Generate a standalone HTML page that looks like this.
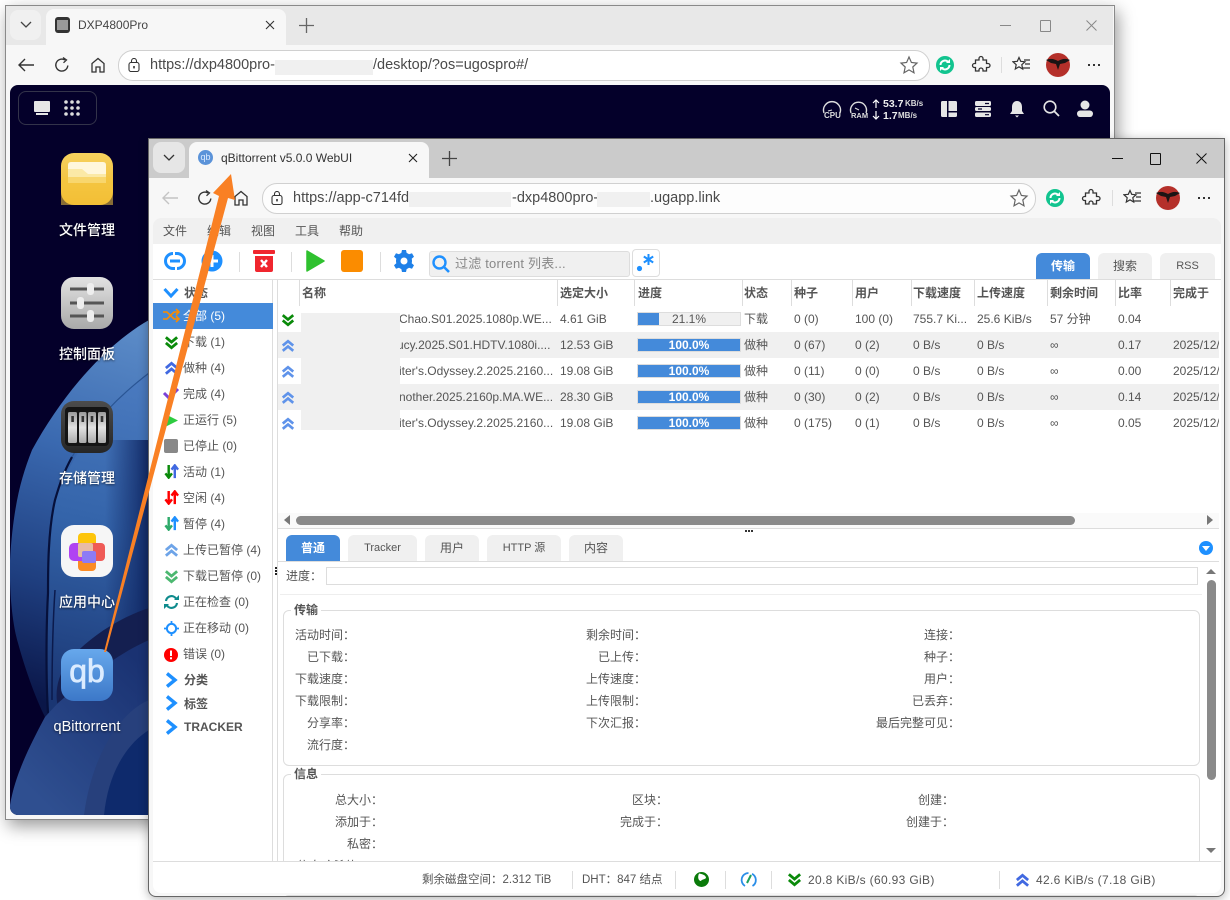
<!DOCTYPE html>
<html><head><meta charset="utf-8"><title>qBittorrent</title>
<style>
html,body{margin:0;padding:0;background:#fff;width:1230px;height:900px;overflow:hidden}
body{position:relative;font-family:"Liberation Sans","Noto Sans CJK SC",sans-serif;font-size:12px;color:#555}
div,span,svg{position:absolute}
span.t,.t{white-space:nowrap;line-height:16px;height:16px}
.b{font-weight:bold}
.r{text-align:right}
.url{font-size:14.5px;color:#4a4a4a;line-height:18px;height:18px;white-space:nowrap}
.lab{color:#fff;font-size:14px;line-height:18px;text-align:center;width:120px;left:27px;font-weight:500;text-shadow:0 1px 2px rgba(0,0,0,.6)}
.ic{left:61px;width:52px;height:52px;border-radius:13px;overflow:hidden}
.tab{background:#f0f0f0;border-radius:6px 6px 0 0;text-align:center;color:#555;line-height:26px;height:26px}
.act{background:#448ada;color:#fff;font-weight:bold}
.sm{font-size:11px}
.vl{width:1px;background:#ddd}
.gr{background:#f0f0f0}
.sep{width:1px;height:26px;top:280px;background:#ddd}
.pb{left:637px;width:102px;height:12px;background:#448ada;border:1px solid #ddd;color:#fff;text-align:center;line-height:13px;font-size:12px;font-weight:bold}
.st{letter-spacing:.33px}
svg{overflow:visible}
</style></head><body>
<svg width="0" height="0" style="left:0;top:0">
<symbol id="dn" viewBox="0 0 16 16"><path d="M2 2.5 8 7.500 14 2.500M2 8.500 8 13.500 14 8.500" fill="none" stroke="currentColor" stroke-width="3"/></symbol>
<symbol id="up" viewBox="0 0 16 16"><path d="M2 7.500 8 2.500 14 7.500M2 13.500 8 8.500 14 13.500" fill="none" stroke="currentColor" stroke-width="3"/></symbol>
<symbol id="ud" viewBox="0 0 16 16"><path d="M5 1V14M1.500 10 5 14.500 8.500 10" fill="none" stroke="var(--a)" stroke-width="2.600"/><path d="M11.500 15V2M8 6 11.500 1.500 15 6" fill="none" stroke="var(--b)" stroke-width="2.600"/></symbol>
<symbol id="star" viewBox="0 0 20 20"><path d="M10 2 12.400 7.500 18 8.100 13.800 12 15 17.800 10 14.900 5 17.800 6.200 12 2 8.100 7.600 7.500Z" fill="none" stroke="#666" stroke-width="1.200"/></symbol>
<symbol id="puz" viewBox="0 0 20 20"><path d="M8 3.500a2 2 0 0 1 4 0V5h3.500v3.500H17a2 2 0 0 1 0 4h-1.500V16H12v-1a2 2 0 0 0-4 0v1H4.500v-3.500H3.500a2 2 0 0 1 0-4h1V5H8Z" fill="none" stroke="#333" stroke-width="1.300"/></symbol>
<symbol id="fav" viewBox="0 0 20 20"><path d="M7 2.500 8.700 6.300 13 6.800 9.800 9.700 10.700 14 7 11.800 3.300 14 4.200 9.700 1 6.800 5.300 6.300Z" fill="none" stroke="#333" stroke-width="1.200"/><path d="M12 5h6M13 9h5M11 13h7" stroke="#333" stroke-width="1.200"/></symbol>
<symbol id="ext" viewBox="0 0 20 20"><circle cx="10" cy="10" r="9" fill="#12c48f"/><path d="M5.500 10a4.500 4.500 0 0 1 7.500-3.300M14.500 10a4.500 4.500 0 0 1-7.500 3.300" fill="none" stroke="#fff" stroke-width="2"/><path d="M11 8h4V4ZM9 12H5v4Z" fill="#fff"/></symbol>
<symbol id="ava" viewBox="0 0 24 24"><circle cx="12" cy="12" r="12" fill="#b5302a"/><path d="M0 7C5 5 8 6 12 8 16 6 19 5 24 7L19 10 14 11 12 17 10 11 5 10Z" fill="#1b1414"/></symbol>
<symbol id="home" viewBox="0 0 18 18"><path d="M3 16V7.500L9 2.500 15 7.500V16H11V11H7V16Z" fill="none" stroke="#333" stroke-width="1.300"/></symbol>
<symbol id="lock" viewBox="0 0 14 14"><rect x="2" y="4.500" width="10" height="9" rx="2" fill="none" stroke="#333" stroke-width="1.100"/><path d="M4.500 4.500V3a2.500 2.500 0 0 1 5 0V4.500" fill="none" stroke="#333" stroke-width="1.100"/><rect x="6.200" y="8" width="1.600" height="2.400" fill="#333"/></symbol>
<symbol id="rel" viewBox="0 0 18 18"><path d="M14.800 9.500A6 6 0 1 1 12 4" fill="none" stroke="#333" stroke-width="1.400"/><path d="M10 1.500 13.500 4 10.500 6.800" fill="none" stroke="#333" stroke-width="1.300"/></symbol>
<symbol id="chv" viewBox="0 0 16 16"><path d="M4 1.500 12 8 4 14.500" fill="none" stroke="#1e90ff" stroke-width="3.400"/></symbol>
</svg>

<!-- BACK WINDOW -->
<div style="left:5px;top:5px;width:1108px;height:813px;border:1px solid #8a8a8a;background:#f7f7f7;box-shadow:3px 6px 16px rgba(0,0,0,.4)"></div>
<div style="left:6px;top:6px;width:1107px;height:39px;background:#e8e8e8"></div>
<div style="left:10px;top:10px;width:31px;height:30px;background:#f0f0f0;border-radius:8px"></div>
<svg style="left:20px;top:20px" width="12" height="10"><path d="M1 2 6 7 11 2" fill="none" stroke="#444" stroke-width="1.300"/></svg>
<div style="left:46px;top:9px;width:240px;height:36px;background:#f7f7f7;border-radius:8px 8px 0 0"></div>
<div style="left:55px;top:17px;width:15px;height:16px;background:#333;border-radius:3px"></div>
<div style="left:57px;top:20px;width:11px;height:10px;background:#999"></div>
<span class="t" style="left:78px;top:17px;color:#444">DXP4800Pro</span>
<svg style="left:265px;top:20px" width="10" height="10"><path d="M1 1 9 9M9 1 1 9" stroke="#333" stroke-width="1.100"/></svg>
<svg style="left:299px;top:18px" width="15" height="15"><path d="M7.500 0V15M0 7.500H15" stroke="#666" stroke-width="1.300"/></svg>
<div style="left:1000px;top:25px;width:11px;height:1px;background:#888"></div>
<div style="left:1040px;top:20px;width:9px;height:10px;border:1px solid #888;border-radius:1px"></div>
<svg style="left:1086px;top:20px" width="11" height="11"><path d="M.5.5 10.500 10.500M10.500.5.500 10.500" stroke="#888" stroke-width="1"/></svg>
<svg style="left:17px;top:56px" width="18" height="18"><path d="M17 9H2M8 3 2 9 8 15" fill="none" stroke="#333" stroke-width="1.400"/></svg>
<svg style="left:53px;top:56px" width="18" height="18"><use href="#rel"/></svg>
<svg style="left:89px;top:56px" width="18" height="18"><use href="#home"/></svg>
<div style="left:118px;top:50px;width:810px;height:29px;border:1px solid #d0d0d0;border-radius:15px;background:#fff"></div>
<svg style="left:127px;top:58px" width="14" height="14"><use href="#lock"/></svg>
<span class="url" style="left:150px;top:56px">https://dxp4800pro-</span>
<div class="gr" style="left:275px;top:60px;width:98px;height:15px"></div>
<span class="url" style="left:373px;top:56px">/desktop/?os=ugospro#/</span>
<svg style="left:899px;top:55px" width="20" height="20"><use href="#star"/></svg>
<svg style="left:935px;top:55px" width="20" height="20"><use href="#ext"/></svg>
<svg style="left:971px;top:55px" width="20" height="20"><use href="#puz"/></svg>
<div class="vl" style="left:1001px;top:57px;height:16px"></div>
<svg style="left:1012px;top:55px" width="20" height="20"><use href="#fav"/></svg>
<svg style="left:1046px;top:53px" width="24" height="24"><use href="#ava"/></svg>
<span style="left:1088px;top:64px;width:2px;height:2px;background:#333;box-shadow:5px 0 #333,10px 0 #333"></span>

<!-- DESKTOP -->
<svg style="left:0;top:0" width="1230" height="900">
<defs>
<clipPath id="dc"><rect x="10" y="85" width="1100" height="730" rx="8"/></clipPath>
<linearGradient id="g1" gradientUnits="userSpaceOnUse" x1="149" y1="330" x2="35" y2="700"><stop offset="0" stop-color="#5c8cc8"/><stop offset=".35" stop-color="#3a69b0"/><stop offset=".7" stop-color="#1f3f80"/><stop offset="1" stop-color="#0a1648"/></linearGradient>
<linearGradient id="g2" gradientUnits="userSpaceOnUse" x1="130" y1="380" x2="60" y2="700"><stop offset="0" stop-color="#4a7abf"/><stop offset=".45" stop-color="#3464aa"/><stop offset="1" stop-color="#1a3673"/></linearGradient>
<linearGradient id="g2b" gradientUnits="userSpaceOnUse" x1="105" y1="0" x2="149" y2="0"><stop offset="0" stop-color="#0e2460" stop-opacity="0"/><stop offset="1" stop-color="#0e2460" stop-opacity=".9"/></linearGradient>
<linearGradient id="g3" gradientUnits="userSpaceOnUse" x1="30" y1="790" x2="149" y2="670"><stop offset="0" stop-color="#2f4f90"/><stop offset="1" stop-color="#1a3272"/></linearGradient>
</defs>
<g clip-path="url(#dc)">
<rect x="10" y="85" width="1100" height="730" fill="#04002a"/>
<path d="M149 320C105 345 62 395 32 450 20 480 13 510 10 560 9 600 14 630 18 643 24 665 34 695 45 717L149 760Z" fill="url(#g1)"/>
<path d="M149 373C105 405 72 455 55 500 48 530 48 570 48 593 46 630 46 680 48 713L149 680Z" fill="url(#g2)"/>
<rect x="105" y="440" width="45" height="240" fill="url(#g2b)"/>
<path d="M149 373C120 395 90 425 72 457" fill="none" stroke="#2a5594" stroke-width="1.200"/>
<path d="M72 457C62 475 58 490 55 500 48 530 48 570 48 593 46 630 46 680 48 713" fill="none" stroke="#06103a" stroke-width="2.200"/>
<path d="M55 590C53 620 52 650 52 700" fill="none" stroke="#0b1a4c" stroke-width="1.500"/>
<path d="M149 608C118 618 85 640 68 662 56 678 55 695 58 707L149 670Z" fill="#141f50"/>
<path d="M45 717C30 745 15 775 10 805V815H149V640C115 655 85 680 58 703Z" fill="url(#g3)"/>
<path d="M149 700C120 712 92 755 84 815H149Z" fill="#27407c"/>
<path d="M149 730C125 745 108 775 104 815H149Z" fill="#0e2a6c"/>
</g>
</svg>
<div style="left:18px;top:91px;width:77px;height:32px;border:1px solid #33334a;border-radius:8px"></div>
<div style="left:34px;top:101px;width:16px;height:11px;background:#e6e6e6;border-radius:1px"></div>
<div style="left:36px;top:113px;width:12px;height:2px;background:#e6e6e6"></div>
<svg style="left:64px;top:100px" width="16" height="16"><g fill="#ddd"><circle cx="2" cy="2" r="1.800"/><circle cx="8" cy="2" r="1.800"/><circle cx="14" cy="2" r="1.800"/><circle cx="2" cy="8" r="1.800"/><circle cx="8" cy="8" r="1.800"/><circle cx="14" cy="8" r="1.800"/><circle cx="2" cy="14" r="1.800"/><circle cx="8" cy="14" r="1.800"/><circle cx="14" cy="14" r="1.800"/></g></svg>
<svg style="left:822px;top:100px" width="20" height="14"><path d="M2 13A8.500 8.500 0 1 1 18 13" fill="none" stroke="#ddd" stroke-width="1.400"/><path d="M6 11 10 10" stroke="#ddd"/></svg>
<span class="t b" style="left:824px;top:108px;color:#ddd;font-size:8px">CPU</span>
<svg style="left:849px;top:100px" width="19" height="14"><path d="M2 13A8 8 0 1 1 17 13" fill="none" stroke="#ddd" stroke-width="1.400"/><path d="M6 8 10 10" stroke="#ddd"/></svg>
<span class="t b" style="left:851px;top:108px;color:#ddd;font-size:7.500px">RAM</span>
<svg style="left:872px;top:99px" width="8" height="22"><path d="M4 9V1M1 4 4 1 7 4M4 12V20M1 17 4 20 7 17" fill="none" stroke="#fff" stroke-width="1.200"/></svg>
<span class="t b" style="left:883px;top:96px;color:#eee;font-size:10.500px">53.7</span>
<span class="t b" style="left:905px;top:96px;color:#ddd;font-size:8px">KB/s</span>
<span class="t b" style="left:883px;top:108px;color:#eee;font-size:10.500px">1.7</span>
<span class="t b" style="left:898px;top:108px;color:#ddd;font-size:8px">MB/s</span>
<svg style="left:941px;top:101px" width="16" height="16"><path d="M0 1.500Q0 0 1.500 0H6V16H1.500Q0 16 0 14.500ZM7.500 0H14.500Q16 0 16 1.500V10H7.500ZM7.500 11.500H16V14.500Q16 16 14.500 16H7.500Z" fill="#e6e6e6"/></svg>
<svg style="left:975px;top:101px" width="16" height="16"><path d="M1.500 0H14.500Q16 0 16 1.500V3.500Q16 5 14.500 5H1.500Q0 5 0 3.500V1.500Q0 0 1.500 0ZM1.500 6H14.500Q16 6 16 7.500V8.500Q16 10 14.500 10H1.500Q0 10 0 8.500V7.500Q0 6 1.500 6ZM1.500 11.500H14.500Q16 11.500 16 13V14.500Q16 16 14.500 16H1.500Q0 16 0 14.500V13Q0 11.500 1.500 11.500Z" fill="#e6e6e6"/><path d="M10 2.500H14M3 8H7M10 13.700H14" stroke="#04002a" stroke-width="1.200"/></svg>
<svg style="left:1010px;top:101px" width="14" height="17"><path d="M7 0C10.500 0 12 3 12 6V10L14 13H0L2 10V6C2 3 3.500 0 7 0ZM5 14.500H9L7 16.500Z" fill="#e6e6e6"/></svg>
<svg style="left:1043px;top:100px" width="17" height="17"><circle cx="7" cy="7" r="5.800" fill="none" stroke="#e6e6e6" stroke-width="1.600"/><path d="M11 11 16 16" stroke="#e6e6e6" stroke-width="1.800"/></svg>
<svg style="left:1077px;top:100px" width="16" height="17"><circle cx="8" cy="5" r="4.500" fill="#e6e6e6"/><rect x="0" y="10.500" width="16" height="6.500" rx="3.200" fill="#e6e6e6"/></svg>

<!-- desktop icons -->
<div class="ic" style="top:153px;background:linear-gradient(#f7d25e,#eeb62c)"></div>
<svg style="left:61px;top:153px" width="52" height="52"><path d="M7 30V12Q7 9 10 9H42Q45 9 45 12V30Z" fill="#fff7dc"/><path d="M7 16H21L27 21H45V30H7Z" fill="#fbe9a6"/><path d="M0 24H52V52H0Z" fill="#f5c63e" opacity=".55"/></svg>
<div class="lab" style="top:221px">文件管理</div>
<div class="ic" style="top:277px;background:linear-gradient(#e2e2e2,#a9a9a9)"></div>
<svg style="left:61px;top:277px" width="52" height="52"><path d="M9 12H43M9 26H43M9 39H43" stroke="#555" stroke-width="3"/><rect x="26" y="6" width="7" height="12" rx="3" fill="#eee"/><rect x="16" y="20" width="7" height="12" rx="3" fill="#eee"/><rect x="26" y="33" width="7" height="12" rx="3" fill="#eee"/></svg>
<div class="lab" style="top:345px">控制面板</div>
<div class="ic" style="top:401px;background:linear-gradient(#4c4c4c,#262626)"></div>
<svg style="left:61px;top:401px" width="52" height="52"><defs><linearGradient id="bay" x1="0" y1="0" x2="0" y2="1"><stop offset="0" stop-color="#999"/><stop offset=".5" stop-color="#e2e2e2"/><stop offset="1" stop-color="#aaa"/></linearGradient></defs><rect x="4" y="6" width="44" height="39" rx="4" fill="#141414"/><rect x="7" y="11" width="9" height="31" rx="1.500" fill="url(#bay)"/><rect x="18" y="11" width="7.500" height="31" rx="1.500" fill="url(#bay)"/><rect x="27" y="11" width="8" height="31" rx="1.500" fill="url(#bay)"/><rect x="37" y="11" width="8" height="31" rx="1.500" fill="url(#bay)"/><g fill="#333"><rect x="10.300" y="15" width="2.600" height="6"/><rect x="20.500" y="15" width="2.600" height="6"/><rect x="29.700" y="15" width="2.600" height="6"/><rect x="39.700" y="15" width="2.600" height="6"/></g></svg>
<div class="lab" style="top:469px">存储管理</div>
<div class="ic" style="top:525px;background:#f6f6f6"></div>
<svg style="left:61px;top:525px" width="52" height="52"><rect x="17" y="8" width="18" height="22" rx="4" fill="#fdc50b"/><rect x="17" y="24" width="18" height="22" rx="4" fill="#fb8b24"/><rect x="8" y="18" width="24" height="18" rx="5" fill="#b043f2"/><rect x="26" y="18" width="18" height="18" rx="4" fill="#ef5b57"/><rect x="17" y="18" width="15" height="14" rx="2" fill="#e8bba4"/><rect x="21" y="26" width="14" height="12" rx="2" fill="#8d7bf5"/></svg>
<div class="lab" style="top:593px">应用中心</div>
<div class="ic" style="top:649px;background:linear-gradient(#67a8ec,#3c78c8)"></div>
<span style="left:61px;top:655px;width:52px;text-align:center;color:#dcecff;font-size:32px;line-height:32px;-webkit-text-stroke:.7px #dcecff">qb</span>
<div class="lab" style="top:718px;font-size:14.500px">qBittorrent</div>

<!-- FRONT WINDOW -->
<div style="left:148px;top:138px;width:1075px;height:757px;border:1px solid #666;background:#f7f7f7;border-radius:0 0 8px 8px;box-shadow:0 2px 10px rgba(0,0,0,.3)"></div>
<div style="left:149px;top:139px;width:1075px;height:39px;background:#cbcbcb"></div>
<div style="left:153px;top:142px;width:32px;height:31px;background:#e6e6e6;border-radius:8px"></div>
<svg style="left:163px;top:153px" width="12" height="10"><path d="M1 2 6 7 11 2" fill="none" stroke="#333" stroke-width="1.300"/></svg>
<div style="left:189px;top:142px;width:240px;height:36px;background:#f7f7f7;border-radius:8px 8px 0 0"></div>
<div style="left:198px;top:150px;width:15px;height:15px;border-radius:50%;background:#5b93d9;color:#dcebff;font-size:9px;line-height:14px;text-align:center">qb</div>
<span class="t" style="left:221px;top:150px;color:#333">qBittorrent v5.0.0 WebUI</span>
<svg style="left:408px;top:153px" width="10" height="10"><path d="M1 1 9 9M9 1 1 9" stroke="#222" stroke-width="1.100"/></svg>
<svg style="left:442px;top:151px" width="15" height="15"><path d="M7.500 0V15M0 7.500H15" stroke="#444" stroke-width="1.300"/></svg>
<div style="left:1112px;top:158px;width:11px;height:1px;background:#111"></div>
<div style="left:1150px;top:153px;width:9px;height:10px;border:1px solid #111;border-radius:1px"></div>
<svg style="left:1196px;top:153px" width="11" height="11"><path d="M.5.5 10.500 10.500M10.500.5.500 10.500" stroke="#111" stroke-width="1"/></svg>
<svg style="left:161px;top:189px" width="18" height="18"><path d="M17 9H2M8 3 2 9 8 15" fill="none" stroke="#c4c4c4" stroke-width="1.400"/></svg>
<svg style="left:196px;top:189px" width="18" height="18"><use href="#rel"/></svg>
<svg style="left:232px;top:189px" width="18" height="18"><use href="#home"/></svg>
<div style="left:262px;top:183px;width:772px;height:29px;border:1px solid #d0d0d0;border-radius:15px;background:#fdfdfd"></div>
<svg style="left:270px;top:191px" width="14" height="14"><use href="#lock"/></svg>
<span class="url" style="left:293px;top:189px">https://app-c714fd</span>
<div class="gr" style="left:409px;top:192px;width:102px;height:15px"></div>
<span class="url" style="left:512px;top:189px">-dxp4800pro-</span>
<div class="gr" style="left:597px;top:192px;width:53px;height:15px"></div>
<span class="url" style="left:650px;top:189px">.ugapp.link</span>
<svg style="left:1009px;top:188px" width="20" height="20"><use href="#star"/></svg>
<svg style="left:1045px;top:188px" width="20" height="20"><use href="#ext"/></svg>
<svg style="left:1081px;top:188px" width="20" height="20"><use href="#puz"/></svg>
<div class="vl" style="left:1112px;top:190px;height:16px"></div>
<svg style="left:1123px;top:188px" width="20" height="20"><use href="#fav"/></svg>
<svg style="left:1156px;top:186px" width="24" height="24"><use href="#ava"/></svg>
<span style="left:1198px;top:197px;width:2px;height:2px;background:#333;box-shadow:5px 0 #333,10px 0 #333"></span>

<!-- page content -->
<div style="left:153px;top:218px;width:1068px;height:643px;background:#fff;border-radius:8px 8px 0 0"></div>
<div style="left:153px;top:218px;width:1068px;height:26px;background:#f0f0f0;border-radius:8px 8px 0 0"></div>
<span class="t" style="left:163px;top:223px">文件</span>
<span class="t" style="left:207px;top:223px">编辑</span>
<span class="t" style="left:251px;top:223px">视图</span>
<span class="t" style="left:295px;top:223px">工具</span>
<span class="t" style="left:339px;top:223px">帮助</span>

<!-- toolbar -->
<svg style="left:164px;top:250px" width="22" height="22"><rect x="1.500" y="3.500" width="19" height="15" rx="7.500" fill="none" stroke="#1e90ff" stroke-width="3"/><path d="M6 11H16" stroke="#1e90ff" stroke-width="3"/><path d="M10 1V6M12 16V21" stroke="#fff" stroke-width="2"/></svg>
<svg style="left:201px;top:250px" width="22" height="22"><circle cx="11" cy="11" r="10.500" fill="#1e90ff"/><path d="M11 5V17M5 11H17" stroke="#fff" stroke-width="3"/></svg>
<div class="vl" style="left:239px;top:252px;height:20px"></div>
<svg style="left:253px;top:250px" width="22" height="22"><rect x="0" y="0" width="22" height="4" rx="1" fill="#f0262e"/><path d="M2 6H20V20Q20 22 18 22H4Q2 22 2 20Z" fill="#f0262e"/><path d="M8 10 14 17M14 10 8 17" stroke="#fff" stroke-width="2.400"/></svg>
<div class="vl" style="left:291px;top:252px;height:20px"></div>
<svg style="left:306px;top:250px" width="19" height="22"><path d="M1 1 18 11 1 21Z" fill="#2fc12f" stroke="#2fc12f" stroke-width="1.500" stroke-linejoin="round"/></svg>
<div style="left:341px;top:250px;width:22px;height:22px;background:#fb8c00;border-radius:3px"></div>
<div class="vl" style="left:380px;top:252px;height:20px"></div>
<svg style="left:393px;top:250px" width="22" height="22" viewBox="0 0 22 22"><path d="M9 0H13L13.700 3A8.500 8.500 0 0 1 16 4.300L19 3.300 21 6.700 18.700 8.800A8.500 8.500 0 0 1 18.700 13.200L21 15.300 19 18.700 16 17.700A8.500 8.500 0 0 1 13.700 19L13 22H9L8.300 19A8.500 8.500 0 0 1 6 17.700L3 18.700 1 15.300 3.300 13.200A8.500 8.500 0 0 1 3.300 8.800L1 6.700 3 3.300 6 4.300A8.500 8.500 0 0 1 8.300 3Z" fill="#1e80e8"/><circle cx="11" cy="11" r="3.500" fill="#fff"/></svg>
<div style="left:429px;top:251px;width:199px;height:24px;background:#f0f0f0;border:1px solid #ddd;border-radius:3px"></div>
<svg style="left:432px;top:255px" width="18" height="18"><circle cx="7.500" cy="7.500" r="6" fill="none" stroke="#1e90ff" stroke-width="2.400"/><path d="M12 12 17 17" stroke="#1e90ff" stroke-width="2.600"/></svg>
<span class="t" style="left:455px;top:256px;color:#888;font-size:13px;letter-spacing:.2px">过滤 torrent 列表...</span>
<div style="left:632px;top:249px;width:26px;height:26px;border:1px solid #ddd;border-radius:4px;background:#fff"></div>
<svg style="left:636px;top:253px" width="20" height="20"><circle cx="3.500" cy="15.500" r="2.600" fill="#1e90ff"/><path d="M12.500 1V12M7.800 3.500 17.200 9.500M17.200 3.500 7.800 9.500" stroke="#1e90ff" stroke-width="2"/></svg>
<div class="tab act" style="left:1036px;top:253px;width:54px">传输</div>
<div class="tab" style="left:1098px;top:253px;width:54px">搜索</div>
<div class="tab sm" style="left:1160px;top:253px;width:55px">RSS</div>
<div style="left:153px;top:279px;width:1068px;height:1px;background:#ddd"></div>

<!-- sidebar -->
<div class="vl" style="left:272px;top:280px;height:581px"></div>
<div class="vl" style="left:277px;top:280px;height:581px"></div>
<svg style="left:163px;top:285px" width="16" height="16" viewBox="0 0 16 16"><path d="M1.500 4 8 11 14.500 4" fill="none" stroke="#1e90ff" stroke-width="3"/></svg>
<span class="t b" style="left:184px;top:285px">状态</span>
<div style="left:153px;top:303px;width:120px;height:26px;background:#448ada"></div>
<svg style="left:163px;top:309px" width="16" height="13"><path d="M0 3H4L11 10H15M0 10H4L11 3H15M13 0 16 3 13 6M13 7 16 10 13 13" fill="none" stroke="#fb8c00" stroke-width="1.600"/></svg>
<span class="t" style="left:183px;top:308px;color:#fff">全部 (5)</span>
<svg style="left:164px;top:335px;color:#0a8a0a" width="15" height="15"><use href="#dn"/></svg>
<span class="t" style="left:183px;top:334px">下载 (1)</span>
<svg style="left:164px;top:361px;color:#4169e1" width="15" height="15"><use href="#up"/></svg>
<span class="t" style="left:183px;top:360px">做种 (4)</span>
<svg style="left:163px;top:387px" width="16" height="14"><path d="M1 6 6 11 15 2" fill="none" stroke="#7b42d8" stroke-width="3"/></svg>
<span class="t" style="left:183px;top:386px">完成 (4)</span>
<svg style="left:165px;top:414px" width="13" height="13"><path d="M0 0 13 6.500 0 13Z" fill="#2ecc40"/></svg>
<span class="t" style="left:183px;top:412px">正运行 (5)</span>
<div style="left:164px;top:439px;width:14px;height:14px;background:#888;border-radius:2px"></div>
<span class="t" style="left:183px;top:438px">已停止 (0)</span>
<svg style="left:164px;top:464px;--a:#0a8a0a;--b:#4169e1" width="15" height="15"><use href="#ud"/></svg>
<span class="t" style="left:183px;top:464px">活动 (1)</span>
<svg style="left:164px;top:490px;--a:#f00;--b:#f00" width="15" height="15"><use href="#ud"/></svg>
<span class="t" style="left:183px;top:490px">空闲 (4)</span>
<svg style="left:164px;top:516px;--a:#2eaa6a;--b:#1e90ff" width="15" height="15"><use href="#ud"/></svg>
<span class="t" style="left:183px;top:516px">暂停 (4)</span>
<svg style="left:164px;top:543px;color:#6ea4e8" width="15" height="15"><use href="#up"/></svg>
<span class="t" style="left:183px;top:542px">上传已暂停 (4)</span>
<svg style="left:164px;top:569px;color:#4cb870" width="15" height="15"><use href="#dn"/></svg>
<span class="t" style="left:183px;top:568px">下载已暂停 (0)</span>
<svg style="left:164px;top:595px" width="15" height="14"><path d="M2 6A5.500 5.500 0 0 1 12 3.500M13 8A5.500 5.500 0 0 1 3 10.500" fill="none" stroke="#0f8b8d" stroke-width="2.200"/><path d="M10 5H15V0ZM5 9H0V14Z" fill="#0f8b8d"/></svg>
<span class="t" style="left:183px;top:594px">正在检查 (0)</span>
<svg style="left:164px;top:621px" width="15" height="15"><circle cx="7.500" cy="7.500" r="4.600" fill="none" stroke="#1e90ff" stroke-width="2"/><path d="M7.500 0V3M7.500 12V15M0 7.500H3M12 7.500H15" stroke="#1e90ff" stroke-width="1.800"/></svg>
<span class="t" style="left:183px;top:620px">正在移动 (0)</span>
<svg style="left:164px;top:648px" width="14" height="14"><circle cx="7" cy="7" r="7" fill="#f00"/><rect x="6" y="2.500" width="2" height="5.500" fill="#fff"/><rect x="6" y="9.300" width="2" height="2" fill="#fff"/></svg>
<span class="t" style="left:183px;top:646px">错误 (0)</span>
<svg style="left:163px;top:672px" width="16" height="16"><use href="#chv"/></svg>
<span class="t b" style="left:184px;top:672px">分类</span>
<svg style="left:163px;top:695px" width="16" height="16"><use href="#chv"/></svg>
<span class="t b" style="left:184px;top:696px">标签</span>
<svg style="left:163px;top:719px" width="16" height="16"><use href="#chv"/></svg>
<span class="t b" style="left:184px;top:719px">TRACKER</span>

<!-- table -->
<div class="sep" style="left:299px"></div><div class="sep" style="left:557px"></div><div class="sep" style="left:634px"></div><div class="sep" style="left:742px"></div><div class="sep" style="left:791px"></div><div class="sep" style="left:852px"></div><div class="sep" style="left:911px"></div><div class="sep" style="left:974px"></div><div class="sep" style="left:1047px"></div><div class="sep" style="left:1115px"></div><div class="sep" style="left:1170px"></div>
<span class="t b" style="left:302px;top:285px">名称</span><span class="t b" style="left:560px;top:285px">选定大小</span><span class="t b" style="left:638px;top:285px">进度</span><span class="t b" style="left:744px;top:285px">状态</span><span class="t b" style="left:794px;top:285px">种子</span><span class="t b" style="left:855px;top:285px">用户</span><span class="t b" style="left:913px;top:285px">下载速度</span><span class="t b" style="left:977px;top:285px">上传速度</span><span class="t b" style="left:1050px;top:285px">剩余时间</span><span class="t b" style="left:1118px;top:285px">比率</span><span class="t b" style="left:1173px;top:285px">完成于</span>

<div class="gr" style="left:278px;top:332px;width:941px;height:26px"></div>
<div class="gr" style="left:278px;top:384px;width:941px;height:26px"></div>

<span class="t" style="left:399px;top:311px">Chao.S01.2025.1080p.WE...</span>
<span class="t" style="left:397px;top:337px">ucy.2025.S01.HDTV.1080i....</span>
<span class="t" style="left:399px;top:363px">iter's.Odyssey.2.2025.2160...</span>
<span class="t" style="left:399px;top:389px">nother.2025.2160p.MA.WE...</span>
<span class="t" style="left:399px;top:415px">iter's.Odyssey.2.2025.2160...</span>
<div class="gr" style="left:301px;top:313px;width:99px;height:117px"></div>

<svg style="left:281px;top:313px;color:#0a8a0a" width="14" height="14"><use href="#dn"/></svg>
<svg style="left:281px;top:339px;color:#5f93ea" width="14" height="14"><use href="#up"/></svg>
<svg style="left:281px;top:365px;color:#5f93ea" width="14" height="14"><use href="#up"/></svg>
<svg style="left:281px;top:391px;color:#5f93ea" width="14" height="14"><use href="#up"/></svg>
<svg style="left:281px;top:417px;color:#5f93ea" width="14" height="14"><use href="#up"/></svg>

<span class="t" style="left:560px;top:311px">4.61 GiB</span><span class="t" style="left:560px;top:337px">12.53 GiB</span><span class="t" style="left:560px;top:363px">19.08 GiB</span><span class="t" style="left:560px;top:389px">28.30 GiB</span><span class="t" style="left:560px;top:415px">19.08 GiB</span>

<div style="left:637px;top:312px;width:102px;height:12px;background:#f0f0f0;border:1px solid #ddd"></div>
<div style="left:638px;top:313px;width:21px;height:12px;background:#448ada"></div>
<span class="t" style="left:637px;top:311px;width:104px;text-align:center">21.1%</span>
<div class="pb" style="top:338px">100.0%</div>
<div class="pb" style="top:364px">100.0%</div>
<div class="pb" style="top:390px">100.0%</div>
<div class="pb" style="top:416px">100.0%</div>

<span class="t" style="left:744px;top:311px">下载</span><span class="t" style="left:744px;top:337px">做种</span><span class="t" style="left:744px;top:363px">做种</span><span class="t" style="left:744px;top:389px">做种</span><span class="t" style="left:744px;top:415px">做种</span>
<span class="t" style="left:794px;top:311px">0 (0)</span><span class="t" style="left:794px;top:337px">0 (67)</span><span class="t" style="left:794px;top:363px">0 (11)</span><span class="t" style="left:794px;top:389px">0 (30)</span><span class="t" style="left:794px;top:415px">0 (175)</span>
<span class="t" style="left:855px;top:311px">100 (0)</span><span class="t" style="left:855px;top:337px">0 (2)</span><span class="t" style="left:855px;top:363px">0 (0)</span><span class="t" style="left:855px;top:389px">0 (2)</span><span class="t" style="left:855px;top:415px">0 (1)</span>
<span class="t" style="left:913px;top:311px">755.7 Ki...</span><span class="t" style="left:913px;top:337px">0 B/s</span><span class="t" style="left:913px;top:363px">0 B/s</span><span class="t" style="left:913px;top:389px">0 B/s</span><span class="t" style="left:913px;top:415px">0 B/s</span>
<span class="t" style="left:977px;top:311px">25.6 KiB/s</span><span class="t" style="left:977px;top:337px">0 B/s</span><span class="t" style="left:977px;top:363px">0 B/s</span><span class="t" style="left:977px;top:389px">0 B/s</span><span class="t" style="left:977px;top:415px">0 B/s</span>
<span class="t" style="left:1050px;top:311px">57 分钟</span><span class="t" style="left:1050px;top:337px">∞</span><span class="t" style="left:1050px;top:363px">∞</span><span class="t" style="left:1050px;top:389px">∞</span><span class="t" style="left:1050px;top:415px">∞</span>
<span class="t" style="left:1118px;top:311px">0.04</span><span class="t" style="left:1118px;top:337px">0.17</span><span class="t" style="left:1118px;top:363px">0.00</span><span class="t" style="left:1118px;top:389px">0.14</span><span class="t" style="left:1118px;top:415px">0.05</span>
<div style="left:1173px;top:330px;width:46px;height:110px;overflow:hidden"><span class="t" style="left:0;top:7px">2025/12/</span><span class="t" style="left:0;top:33px">2025/12/</span><span class="t" style="left:0;top:59px">2025/12/</span><span class="t" style="left:0;top:85px">2025/12/</span></div>

<!-- horiz scrollbar -->
<div style="left:278px;top:513px;width:941px;height:15px;background:#fafafa"></div>
<svg style="left:283px;top:515px" width="8" height="10"><path d="M7 0V10L1 5Z" fill="#777"/></svg>
<div style="left:296px;top:516px;width:779px;height:9px;background:#8a8a8a;border-radius:5px"></div>
<svg style="left:1206px;top:515px" width="8" height="10"><path d="M1 0V10L7 5Z" fill="#777"/></svg>
<div style="left:278px;top:528px;width:941px;height:1px;background:#ddd"></div>
<span style="left:745px;top:530px;width:2px;height:2px;background:#333;box-shadow:3px 0 #333,6px 0 #333"></span>
<span style="left:275px;top:567px;width:2px;height:2px;background:#222;box-shadow:0 3px #222,0 6px #222"></span>

<!-- detail tabs -->
<div class="tab act" style="left:286px;top:535px;width:54px">普通</div>
<div class="tab sm" style="left:348px;top:535px;width:69px">Tracker</div>
<div class="tab" style="left:425px;top:535px;width:54px">用户</div>
<div class="tab sm" style="left:487px;top:535px;width:74px">HTTP 源</div>
<div class="tab" style="left:569px;top:535px;width:54px">内容</div>
<svg style="left:1199px;top:541px" width="14" height="14"><circle cx="7" cy="7" r="7" fill="#1e90ff"/><path d="M3 5H11L7 10Z" fill="#fff"/></svg>
<div style="left:278px;top:561px;width:941px;height:1px;background:#ddd"></div>
<span class="t" style="left:286px;top:568px">进度：</span>
<div style="left:326px;top:567px;width:870px;height:16px;border:1px solid #ddd"></div>
<div style="left:280px;top:594px;width:922px;height:1px;background:#eee"></div>

<div style="left:283px;top:610px;width:915px;height:154px;border:1px solid #ddd;border-radius:6px"></div>
<span class="t b" style="left:291px;top:602px;background:#fff;padding:0 3px">传输</span>
<span class="t r" style="left:255px;width:100px;top:627px">活动时间：</span><span class="t r" style="left:255px;width:100px;top:649px">已下载：</span><span class="t r" style="left:255px;width:100px;top:671px">下载速度：</span><span class="t r" style="left:255px;width:100px;top:693px">下载限制：</span><span class="t r" style="left:255px;width:100px;top:715px">分享率：</span><span class="t r" style="left:255px;width:100px;top:737px">流行度：</span>
<span class="t r" style="left:546px;width:100px;top:627px">剩余时间：</span><span class="t r" style="left:546px;width:100px;top:649px">已上传：</span><span class="t r" style="left:546px;width:100px;top:671px">上传速度：</span><span class="t r" style="left:546px;width:100px;top:693px">上传限制：</span><span class="t r" style="left:546px;width:100px;top:715px">下次汇报：</span>
<span class="t r" style="left:860px;width:100px;top:627px">连接：</span><span class="t r" style="left:860px;width:100px;top:649px">种子：</span><span class="t r" style="left:860px;width:100px;top:671px">用户：</span><span class="t r" style="left:860px;width:100px;top:693px">已丢弃：</span><span class="t r" style="left:860px;width:100px;top:715px">最后完整可见：</span>

<div style="left:283px;top:774px;width:915px;height:120px;border:1px solid #ddd;border-radius:6px"></div>
<span class="t b" style="left:291px;top:766px;background:#fff;padding:0 3px">信息</span>
<span class="t r" style="left:283px;width:100px;top:792px">总大小：</span><span class="t r" style="left:283px;width:100px;top:814px">添加于：</span><span class="t r" style="left:283px;width:100px;top:836px">私密：</span><span class="t" style="left:297px;top:858px">信息哈希值</span>
<span class="t r" style="left:568px;width:100px;top:792px">区块：</span><span class="t r" style="left:568px;width:100px;top:814px">完成于：</span>
<span class="t r" style="left:854px;width:100px;top:792px">创建：</span><span class="t r" style="left:854px;width:100px;top:814px">创建于：</span>

<svg style="left:1206px;top:568px" width="10" height="7"><path d="M0 6H10L5 1Z" fill="#777"/></svg>
<div style="left:1207px;top:580px;width:9px;height:200px;background:#8a8a8a;border-radius:5px"></div>
<svg style="left:1206px;top:847px" width="10" height="7"><path d="M0 1H10L5 6Z" fill="#777"/></svg>

<!-- status bar -->
<div style="left:149px;top:861px;width:1075px;height:34px;background:#f7f7f7;border-radius:0 0 8px 8px"></div>
<div style="left:153px;top:861px;width:1068px;height:31px;background:#fff;border-top:1px solid #ddd;border-radius:0 0 8px 8px"></div>
<span class="t" style="left:422px;top:872px;font-size:11.500px">剩余磁盘空间：2.312 TiB</span>
<div class="vl" style="left:572px;top:871px;height:18px"></div>
<span class="t" style="left:582px;top:872px;font-size:11.500px">DHT：847 结点</span>
<div class="vl" style="left:675px;top:871px;height:18px"></div>
<svg style="left:694px;top:872px" width="15" height="15"><circle cx="7.500" cy="7.500" r="7.500" fill="#0a7a0a"/><path d="M5 1.500C8 2 12 3 12 6 10 8 8 7 7 9 5 9 3 6 5 1.500Z" fill="#fff"/></svg>
<div class="vl" style="left:725px;top:871px;height:18px"></div>
<svg style="left:741px;top:872px" width="15" height="15"><path d="M4 14A7 7 0 0 1 7.500 1M11 1.800A7 7 0 0 1 11.500 14" fill="none" stroke="#2a8ee8" stroke-width="1.800"/><path d="M6 11 10 3" stroke="#1ea05a" stroke-width="2"/></svg>
<div class="vl" style="left:771px;top:871px;height:18px"></div>
<svg style="left:787px;top:872px;color:#0a8a0a" width="15" height="15"><use href="#dn"/></svg>
<span class="t st" style="left:808px;top:872px">20.8 KiB/s (60.93 GiB)</span>
<div class="vl" style="left:999px;top:871px;height:18px"></div>
<svg style="left:1015px;top:873px;color:#4169e1" width="15" height="15"><use href="#up"/></svg>
<span class="t st" style="left:1036px;top:872px">42.6 KiB/s (7.18 GiB)</span>

<!-- orange arrow -->
<svg style="left:0;top:0" width="1230" height="900"><path d="M104 652 106 652 228 198 235 200 231 174 213 193 219 196Z" fill="#f98024"/></svg>
</body></html>
